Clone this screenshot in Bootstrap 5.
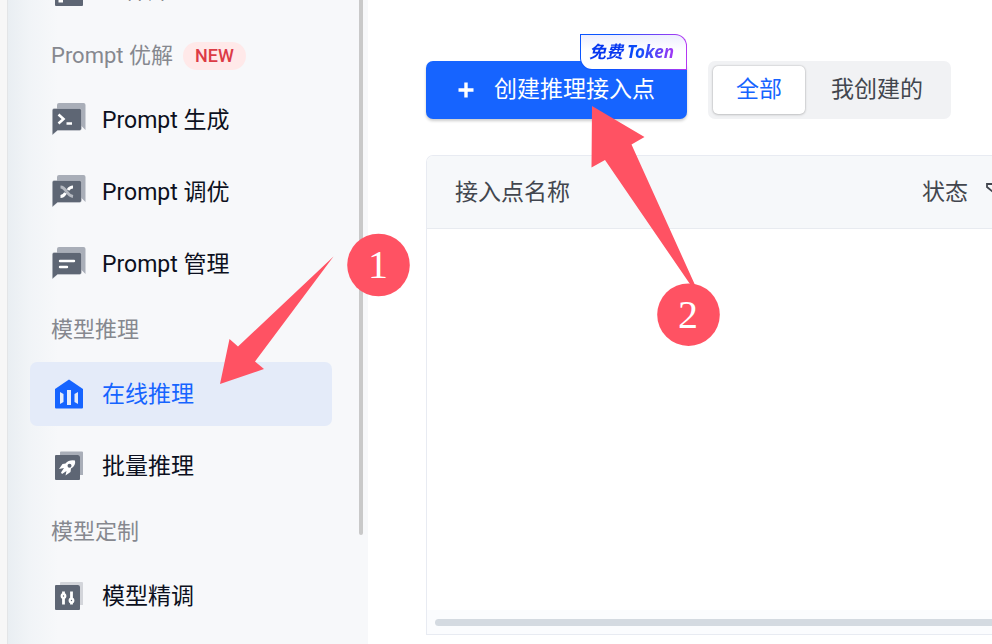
<!DOCTYPE html>
<html lang="zh-CN">
<head>
<meta charset="utf-8">
<meta name="viewport" content="width=device-width, initial-scale=1">
<title>在线推理</title>
<link href="https://cdn.jsdelivr.net/npm/bootstrap@5.3.0/dist/css/bootstrap.min.css" rel="stylesheet">
<style>
  body { font-family: Roboto, "Noto Sans CJK SC", sans-serif; font-size: 23px; line-height: 32px; color: #0c1020; }
  .edge-strip { width: 8px; background: #f7f7f7; border-right: 1px solid #e3e5e7; }
  .side-panel { width: 360px; background: linear-gradient(90deg, #e9eef2 0, #f1f4f7 22px, #f7f8fa 50px); }
  .side-menu { width: 302px; margin: -42px 0 0 22px; gap: 8px; }
  .menu-link { height: 64px; padding: 2px 22px 0; border-radius: 7px; color: inherit; gap: 16px; text-decoration: none; white-space: nowrap; }
  .menu-link svg { width: 34px; height: 34px; margin-bottom: 2px; }
  .menu-link.current { background: #e4ebf9; color: #1664ff; }
  .menu-title { height: 50px; padding: 2px 0 0 21px; font-size: 22px; color: #86888f; gap: 10px; }
  .new-pill { background: #ffe9e9; color: #dc3b46; font-size: 18px; line-height: 28px; padding: 0 12px; font-weight: 500; }
  .side-scroll { left: 351px; top: 0; width: 4px; height: 83%; background: #c9c9c9; border-radius: 0 0 4px 4px; }
  .content { padding: 61px 0 9px 58px; min-width: 0; }
  .tool-row { gap: 21px; margin-bottom: 36px; }
  .create-btn { height: 58px; padding: 0 32px 0 30px; border-radius: 7px; background: #1664ff; color: #fff; font-size: inherit; line-height: inherit; gap: 18px; box-shadow: 0 2px 3px #0003; }
  .create-btn:hover { background: #1664ff; color: #fff; }
  .token-tag { right: 0; top: -27px; width: 107px; height: 36px; border: 1px solid transparent; border-radius: 0 12px 0 12px;
    background: linear-gradient(#edeefe, #fff 16px) padding-box, linear-gradient(90deg, #0b55ff 30%, #b537f2) border-box; }
  .token-text { font: italic 700 17px/34px "Noto Sans", "Noto Sans CJK SC", sans-serif; color: transparent; padding-right: 4px;
    background: linear-gradient(90deg, #0838f0 35%, #0b50fb 55%, #b634f4); -webkit-background-clip: text; background-clip: text; }
  .token-text b { margin-left: 4px; font-weight: 700; }
  .scope-group { height: 58px; padding: 5px; gap: 3px; background: #f1f2f4; border-radius: 7px; }
  .scope-group label { height: 48px; padding: 8px 23px; border-radius: 5px; color: #42464e; cursor: pointer; }
  .scope-group .btn-check:checked + label { background: #fff; color: #1664ff; box-shadow: 0 0 2px #0004, 0 1px 3px #0002; }
  .list-panel { border: 1px solid #e8ebf2; border-right: 0; border-radius: 7px 0 0 0; }
  .list-head { table-layout: fixed; color: #42464e; }
  .list-head th { height: 73px; padding: 1px 28px 0; font-weight: 400; background: #f6f8fa; box-shadow: inset 0 -1px #e8ebf0; white-space: nowrap; overflow: hidden; }
  .list-head .state-col { width: 98px; padding-right: 0; }
  .state-col svg { margin: -6px 0 0 17px; }
  .scroll-track { height: 24px; padding: 9px 0 0 8px; background: #fbfcfe; }
  .scroll-thumb { height: 7px; border-radius: 4px 0 0 4px; background: #d4dae1; }
  .callouts { left: 0; top: 0; width: 992px; height: 644px; pointer-events: none; }
  .callouts text { font: 40px "Liberation Serif", serif; fill: #fff; text-anchor: middle; }
</style>
</head>
<body>
<svg class="d-none">
  <symbol id="chat" viewBox="0 1 34 34">
    <path fill="#a9aeb8" d="M7 1h24.500q2 0 2 2v25l-5-5H7q-2 0-2-2V3q0-2 2-2z"/>
    <path fill="#5e6674" stroke="#f7f8fa" stroke-width=".3" d="M2 6.500h25.500q2 0 2 2v18q0 2-2 2H5.500L.3 33V8.500q0-2 1.700-2z"/>
  </symbol>
  <symbol id="tile" viewBox="0 0 34 34">
    <path fill="#5e6674" d="M4 6h22q2 0 2 2v22q0 1-1 1H4q-1 0-1-1V7q0-1 1-1z"/>
  </symbol>
</svg>
<div class="d-flex vh-100 overflow-hidden position-relative">
  <div class="edge-strip flex-shrink-0"></div>
  <aside class="side-panel flex-shrink-0 position-relative overflow-hidden">
    <nav class="side-menu d-flex flex-column">
      <a href="#" class="menu-link d-flex align-items-center"><svg viewBox="0 0 34 34"><path fill="#5e6674" d="M3 5h28v27q0 1-1 1H4q-1 0-1-1z"/><path fill="#fff" d="M6.500 24.500H11v5H6.500z"/></svg>组件库</a>
      <div class="menu-title d-flex align-items-center">Prompt 优解 <span class="new-pill rounded-pill">NEW</span></div>
      <a href="#" class="menu-link d-flex align-items-center"><svg viewBox="0 0 34 34"><use href="#chat"/><path fill="none" stroke="#fff" stroke-width="2.600" d="M6.500 11.500l5 4.500-5 4.500M14.500 20.500H20"/></svg>Prompt 生成</a>
      <a href="#" class="menu-link d-flex align-items-center"><svg viewBox="0 0 34 34"><use href="#chat"/><path fill="none" stroke="#b5b9c1" stroke-width="3" d="M8.500 12q3 0 6 4.500t6.500 5"/><path fill="none" stroke="#fff" stroke-width="3" d="M8.500 21.500q3 0 5-3.500M16 15q2-3 5-3"/></svg>Prompt 调优</a>
      <a href="#" class="menu-link d-flex align-items-center"><svg viewBox="0 0 34 34"><use href="#chat"/><path fill="none" stroke="#fff" stroke-width="2.400" stroke-linecap="round" d="M8 14h14M8 20h7"/></svg>Prompt 管理</a>
      <div class="menu-title d-flex align-items-center">模型推理</div>
      <a href="#" class="menu-link current d-flex align-items-center" aria-current="page"><svg viewBox="0 0 34 34"><path fill="#1664ff" d="M17 2.500L31 12v18.500q0 1-1 1H4q-1 0-1-1V12z"/><path fill="#e4ebf9" d="M15 13h4v15h-4zM8 15l3.500 2v8L8 27zM26 15l-3.500 2v8l3.500 2z"/></svg>在线推理</a>
      <a href="#" class="menu-link d-flex align-items-center"><svg viewBox="0 0 34 34"><path fill="#a9aeb8" d="M9 2.500h21q1 0 1 1V26h-3V8q0-2-2-2H8V3.500q0-1 1-1z"/><use href="#tile"/><path fill="#fff" fill-rule="evenodd" d="M23 11.500q-6-1-9.500 3l-3 .5-3.500 5 5-1-3 4.500 1 1.500 4.500-3-1 4.500 5-3.500.5-3.500q5-3 4-8zM17.500 14.800a2 2 0 1 1 0 4 2 2 0 0 1 0-4z"/></svg>批量推理</a>
      <div class="menu-title d-flex align-items-center">模型定制</div>
      <a href="#" class="menu-link d-flex align-items-center"><svg viewBox="0 0 34 34"><path fill="#d3d5da" d="M9 3h21q1 0 1 1v22h-3V8q0-2-2-2H8V4q0-1 1-1z"/><use href="#tile"/><path stroke="#fff" stroke-width="2.800" d="M11.500 12.500v13M19.500 12.500v13"/><g fill="#5e6674" stroke="#fff" stroke-width="2.200"><circle cx="11.500" cy="17" r="1.800"/><circle cx="19.500" cy="21.500" r="1.800"/></g></svg>模型精调</a>
    </nav>
    <div class="side-scroll position-absolute"></div>
  </aside>
  <main class="content flex-grow-1 d-flex flex-column">
    <div class="tool-row d-flex">
      <button type="button" class="create-btn btn border-0 position-relative d-flex align-items-center text-nowrap">
        <svg width="20" height="20" viewBox="0 0 20 20"><path stroke="#fff" stroke-width="3.400" d="M2.500 10h15M10 2.500v15"/></svg>创建推理接入点
        <span class="token-tag position-absolute d-flex justify-content-center"><span class="token-text">免费<b>Token</b></span></span>
      </button>
      <div class="scope-group d-flex flex-shrink-0" role="group" aria-label="范围">
        <input type="radio" class="btn-check" name="scope" id="scopeAll" checked><label for="scopeAll">全部</label>
        <input type="radio" class="btn-check" name="scope" id="scopeMine"><label for="scopeMine">我创建的</label>
      </div>
    </div>
    <section class="list-panel flex-grow-1 d-flex flex-column overflow-hidden">
      <table class="list-head w-100">
        <thead><tr><th scope="col">接入点名称</th>
          <th scope="col" class="state-col">状态<svg width="20" height="20" viewBox="0 0 20 20" fill="none" stroke="#42464e" stroke-width="1.800"><path d="M2 3h16v3l-6 5v6l-4-2v-4L2 6z"/></svg></th></tr></thead>
      </table>
      <div class="scroll-track mt-auto"><div class="scroll-thumb"></div></div>
    </section>
  </main>
  <svg class="callouts position-absolute" viewBox="0 0 992 644">
    <g fill="#ff5263">
      <path d="M333.500 256.500L255 361.500l9 7.500-44 15 9.500-45 8.500 7.500z"/>
      <path d="M592 106l52.500 31-13 7.500L700 296l-8-9L605 160l-13.500 7.500z"/>
      <circle cx="378.500" cy="265" r="31.300"/>
      <circle cx="688.500" cy="314.700" r="31.300"/>
    </g>
    <text x="378" y="278">1</text>
    <text x="688" y="328">2</text>
  </svg>
</div>
<script src="https://cdn.jsdelivr.net/npm/bootstrap@5.3.0/dist/js/bootstrap.bundle.min.js"></script>
</body>
</html>
